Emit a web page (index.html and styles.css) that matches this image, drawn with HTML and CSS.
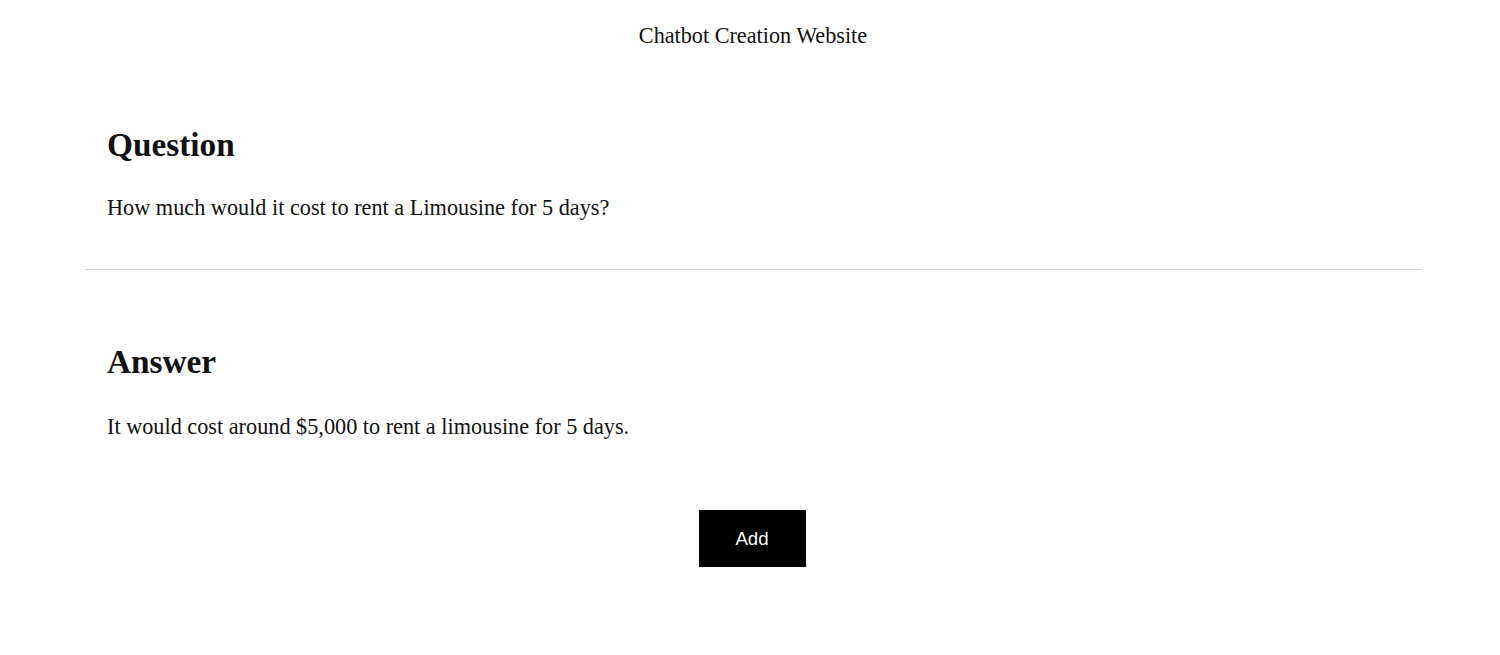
FILE: index.html
```html
<!DOCTYPE html>
<html lang="en">
<head>
<meta charset="utf-8">
<title>Chatbot Creation Website</title>
<link rel="stylesheet" href="styles.css">
</head>
<body>
<div class="page">
  <header class="site-title">Chatbot Creation Website</header>
  <main class="content">
    <section class="block question">
      <h2 class="block-title">Question</h2>
      <p class="block-text">How much would it cost to rent a Limousine for 5 days?</p>
    </section>
    <hr class="divider">
    <section class="block answer">
      <h2 class="block-title">Answer</h2>
      <p class="block-text">It would cost around $5,000 to rent a limousine for 5 days.</p>
    </section>
    <div class="actions">
      <button class="add-btn" type="button">Add</button>
    </div>
  </main>
</div>
</body>
</html>
```
FILE: styles.css
```css
html, body {
  margin: 0;
  padding: 0;
  background: #ffffff;
}
body {
  font-family: "Liberation Serif", "Times New Roman", serif;
  color: #111111;
}
.page {
  width: 1336px;
  margin-left: 85px;
  padding-top: 24px;
}
.site-title {
  text-align: center;
  font-size: 22.2px;
  line-height: 24px;
  height: 24px;
}
.content {
  display: flex;
  flex-direction: column;
}
.block {
  padding: 0 22px;
}
.block-title {
  margin: 0;
  font-size: 33.3px;
  line-height: 36px;
  font-weight: bold;
}
.question .block-title {
  margin-top: 79px;
}
.answer .block-title {
  margin-top: 74px;
}
.block-text {
  margin: 0;
  font-size: 22.25px;
  line-height: 24px;
}
.question .block-text {
  margin-top: 33px;
}
.answer .block-text {
  margin-top: 35px;
}
.divider {
  margin: 49px 0 0 0;
  border: 0;
  height: 1px;
  background: #d0d0d0;
}
.actions {
  display: flex;
  justify-content: center;
  margin-top: 71px;
  padding-right: 2px;
}
.add-btn {
  width: 107px;
  height: 57px;
  background: #000000;
  color: #ffffff;
  border: 0;
  border-radius: 0;
  font-family: "Liberation Sans", Arial, sans-serif;
  font-size: 18.67px;
  padding: 0;
}
```
